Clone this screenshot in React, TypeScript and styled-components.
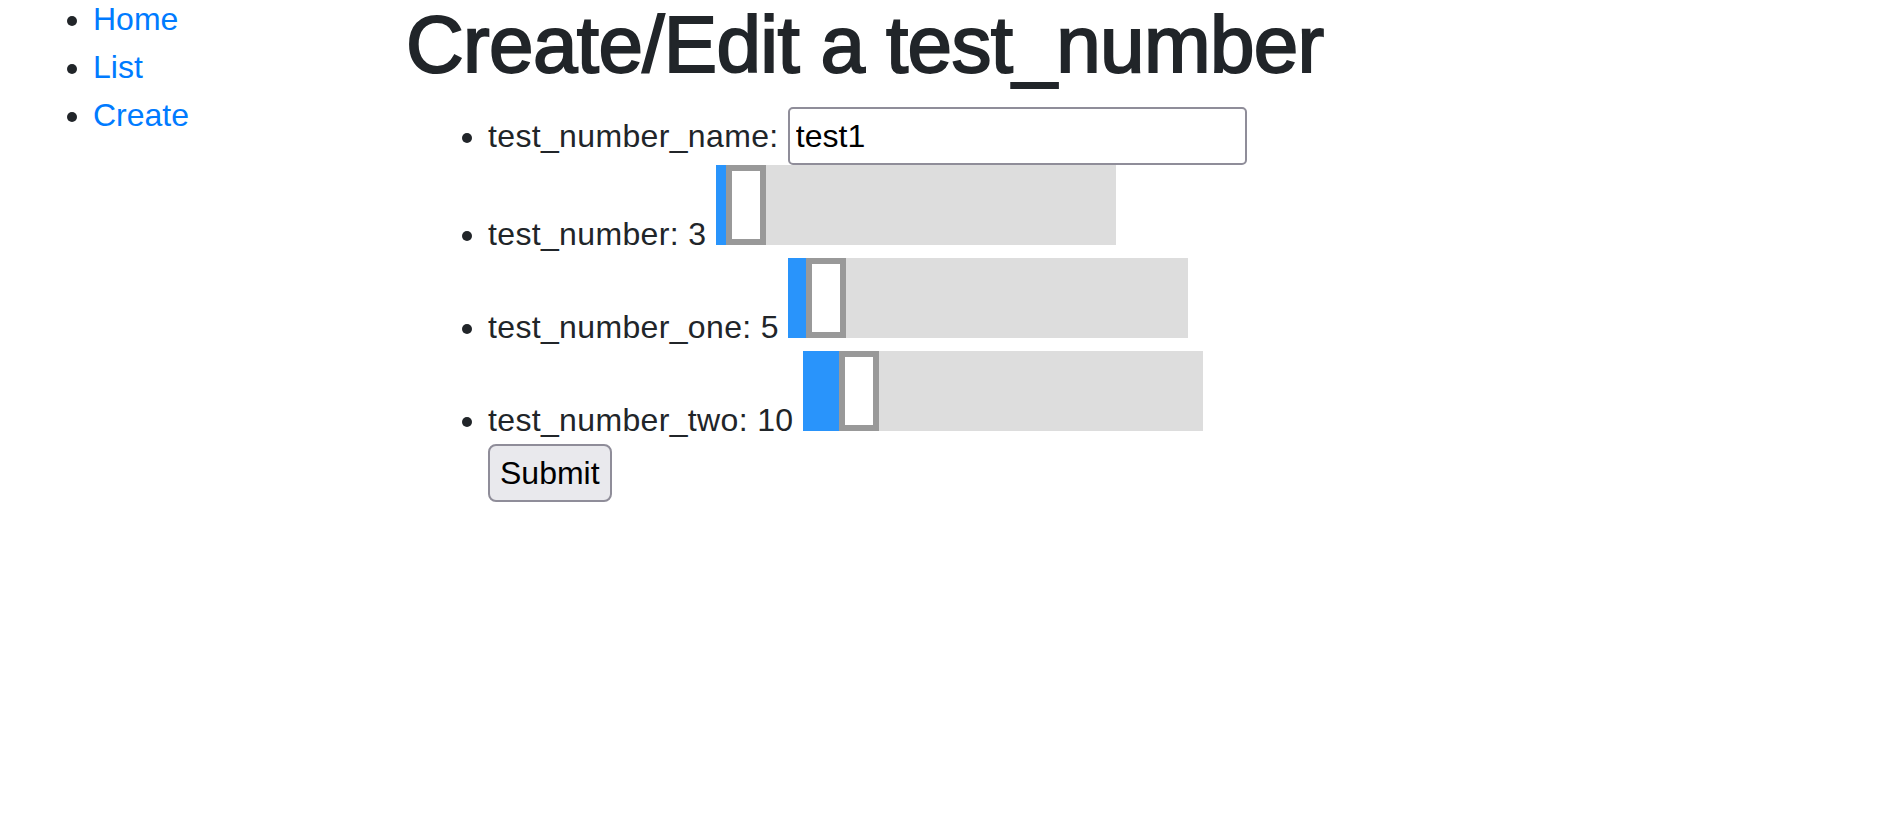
import React from "react";
import styled, { createGlobalStyle } from "styled-components";

const GlobalStyle = createGlobalStyle`
	html, body {
		margin: 0;
		padding: 0;
		background: #fff;
	}
	body {
		font-family: "Liberation Sans", Arial, sans-serif;
		font-size: 32px;
		line-height: 1.5;
		color: #212529;
	}
`;

const Layout = styled.div`
	display: grid;
	grid-template-columns: 393px 1fr;
	align-items: start;
	padding-left: 13px;
	margin-top: -5px;
`;

const NavList = styled.ul`
	margin: 0;
	padding-left: 80px;
`;

const NavLink = styled.a`
	color: #007bff;
	text-decoration: none;
`;

const Main = styled.main`
	min-width: 0;
`;

const Title = styled.h1`
	margin: 2px 0 14px;
	font-size: 80px;
	font-weight: 400;
	line-height: 1.2;
	letter-spacing: -0.65px;
	-webkit-text-stroke: 2px #212529;
`;

const Form = styled.form`
	padding-left: 82px;
`;

const FieldList = styled.ul`
	margin: 0;
	padding: 0;
`;

const Field = styled.li`
	letter-spacing: 0.35px;
`;

const TextInput = styled.input`
	box-sizing: border-box;
	width: 459px;
	height: 58px;
	padding: 0 6px;
	border: 2px solid #8f8d99;
	border-radius: 5px;
	background: #fff;
	color: #000;
	font: inherit;
	letter-spacing: 0;
	line-height: normal;
	vertical-align: baseline;
	outline: none;
`;

// overflow hidden puts the baseline at the bottom edge, like the range inputs
const SliderTrack = styled.span`
	display: inline-block;
	overflow: hidden;
	width: 400px;
	height: 80px;
	background: #ddd;
	vertical-align: baseline;
`;

const SliderRail = styled.span`
	display: flex;
	height: 100%;
`;

const SliderFill = styled.span`
	flex: none;
	height: 100%;
	background: #2994fb;
`;

const SliderThumb = styled.span`
	flex: none;
	box-sizing: border-box;
	width: 40px;
	height: 100%;
	border: 6px solid #999;
	background: #fff;
`;

const SubmitButton = styled.button`
	display: block;
	box-sizing: border-box;
	height: 58px;
	padding: 0 10px;
	border: 2px solid #8f8d99;
	border-radius: 8px;
	background: #e9e9ed;
	color: #000;
	font: inherit;
	line-height: normal;
`;

const THUMB_WIDTH = 40;
const TRACK_WIDTH = 400;

interface SliderProps {
	value: number;
	max: number;
}

function Slider({ value, max }: SliderProps) {
	const fill = (value / max) * (TRACK_WIDTH - THUMB_WIDTH);
	return (
		<SliderTrack role="slider" aria-valuenow={value} aria-valuemin={0} aria-valuemax={max}>
			<SliderRail>
				<SliderFill style={{ width: `${fill}px` }} />
				<SliderThumb />
			</SliderRail>
		</SliderTrack>
	);
}

const links = ["Home", "List", "Create"];

const numbers = [
	{ name: "test_number", value: 3 },
	{ name: "test_number_one", value: 5 },
	{ name: "test_number_two", value: 10 },
];

export default function App() {
	return (
		<>
			<GlobalStyle />
			<Layout>
				<nav>
					<NavList>
						{links.map((l) => (
							<li key={l}>
								<NavLink href="#">{l}</NavLink>
							</li>
						))}
					</NavList>
				</nav>
				<Main>
					<Title>Create/Edit a test_number</Title>
					<Form onSubmit={(e) => e.preventDefault()}>
						<FieldList>
							<Field>
								test_number_name: <TextInput type="text" defaultValue="test1" />
							</Field>
							{numbers.map((n) => (
								<Field key={n.name}>
									{n.name}: {n.value} <Slider value={n.value} max={100} />
								</Field>
							))}
						</FieldList>
						<SubmitButton type="submit">Submit</SubmitButton>
					</Form>
				</Main>
			</Layout>
		</>
	);
}
